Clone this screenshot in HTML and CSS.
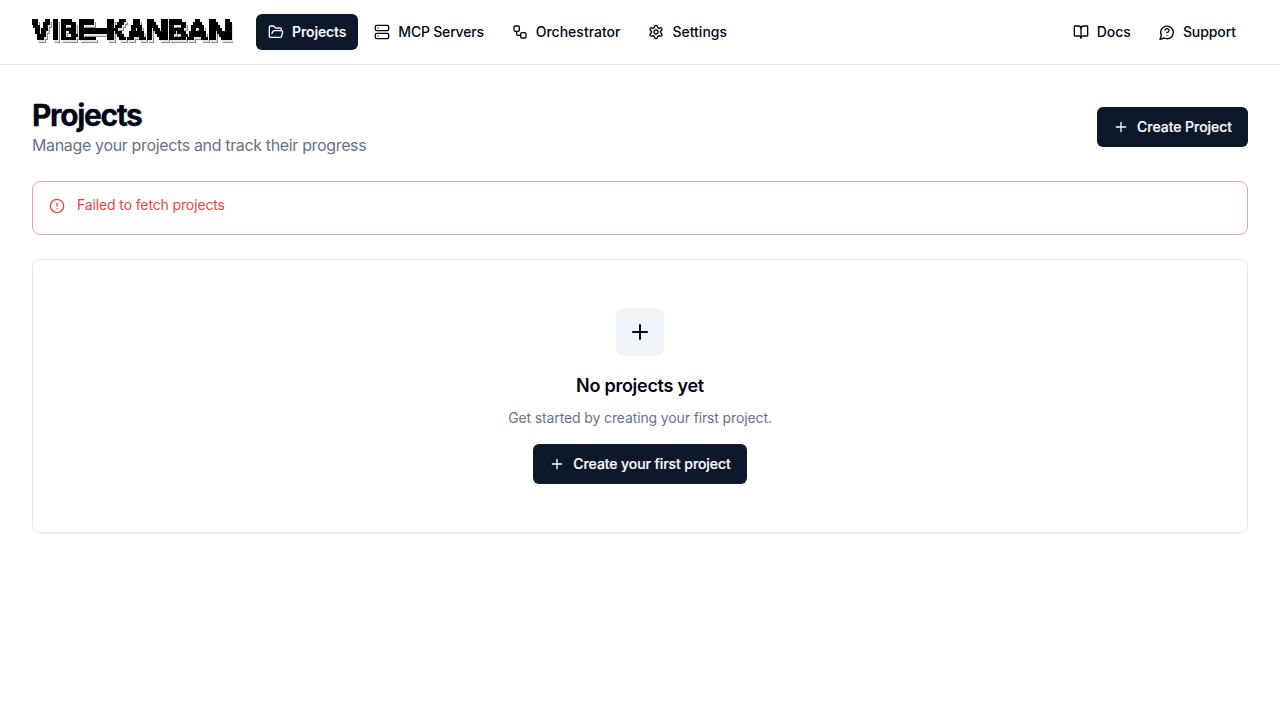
FILE: index.html
```html
<!DOCTYPE html>
<html lang="en">
<head>
<meta charset="utf-8">
<title>Vibe Kanban</title>
<link rel="stylesheet" href="styles.css">
</head>
<body>
<header class="navbar">
  <svg class="logo" width="200" height="26" viewBox="0 0 200 26" role="img" aria-label="VIBE-KANBAN">
    <defs>
      <filter id="pixel-shadow" filterUnits="userSpaceOnUse" x="0" y="0" width="201" height="27" color-interpolation-filters="sRGB">
        <feFlood x="0" y="1" width="1" height="1" flood-color="#000" result="point"/>
        <feOffset in="point" x="0" y="0" width="2" height="3" result="cell"/>
        <feTile in="cell" result="grid"/>
        <feComposite in="SourceGraphic" in2="grid" operator="in"/>
        <feComponentTransfer><feFuncA type="discrete" tableValues="0 1"/></feComponentTransfer>
        <feMorphology operator="dilate" radius="1" result="blocks"/>
        <feFlood flood-color="#8c8c8c"/>
        <feComposite in2="blocks" operator="in"/>
        <feOffset dx="2" dy="3" result="shade"/>
        <feFlood flood-color="#e4e4e4"/>
        <feComposite in2="blocks" operator="in"/>
        <feOffset dx="1" dy="2" result="gap"/>
        <feMerge><feMergeNode in="shade"/><feMergeNode in="gap"/><feMergeNode in="blocks"/></feMerge>
      </filter>
    </defs>
    <g class="logo-text" filter="url(#pixel-shadow)">
      <text x="0" y="21" textLength="18" lengthAdjust="spacingAndGlyphs">V</text>
      <text x="19.5" y="21" textLength="7" lengthAdjust="spacingAndGlyphs">I</text>
      <text x="28" y="21" textLength="17.5" lengthAdjust="spacingAndGlyphs">B</text>
      <text x="45.5" y="21" textLength="17.5" lengthAdjust="spacingAndGlyphs">E</text>
      <text x="61.5" y="20" textLength="14" lengthAdjust="spacingAndGlyphs">-</text>
      <text x="75" y="21" textLength="19" lengthAdjust="spacingAndGlyphs">K</text>
      <text x="95" y="21" textLength="19" lengthAdjust="spacingAndGlyphs">A</text>
      <text x="113.5" y="21" textLength="23" lengthAdjust="spacingAndGlyphs">N</text>
      <text x="136" y="21" textLength="19.5" lengthAdjust="spacingAndGlyphs">B</text>
      <text x="155.5" y="21" textLength="20" lengthAdjust="spacingAndGlyphs">A</text>
      <text x="176" y="21" textLength="24" lengthAdjust="spacingAndGlyphs">N</text>
    </g>
  </svg>
  <nav class="nav-links">
    <a class="nav-item active"><svg class="icon" viewBox="0 0 24 24"><path d="m6 14 1.5-2.9A2 2 0 0 1 9.24 10H20a2 2 0 0 1 1.94 2.5l-1.54 6a2 2 0 0 1-1.95 1.5H4a2 2 0 0 1-2-2V5a2 2 0 0 1 2-2h3.9a2 2 0 0 1 1.69.9l.81 1.2a2 2 0 0 0 1.67.9H18a2 2 0 0 1 2 2v2"/></svg>Projects</a>
    <a class="nav-item servers"><svg class="icon" viewBox="0 0 24 24"><rect width="20" height="8" x="2" y="2" rx="2"/><rect width="20" height="8" x="2" y="14" rx="2"/><path d="M6 6h.01M6 18h.01"/></svg>MCP Servers</a>
    <a class="nav-item"><svg class="icon" viewBox="0 0 24 24"><rect width="8" height="8" x="3" y="3" rx="2"/><path d="M7 11v4a2 2 0 0 0 2 2h4"/><rect width="8" height="8" x="13" y="13" rx="2"/></svg>Orchestrator</a>
    <a class="nav-item"><svg class="icon" viewBox="0 0 24 24"><path d="M12.22 2h-.44a2 2 0 0 0-2 2v.18a2 2 0 0 1-1 1.73l-.43.25a2 2 0 0 1-2 0l-.15-.08a2 2 0 0 0-2.73.73l-.22.38a2 2 0 0 0 .73 2.73l.15.1a2 2 0 0 1 1 1.72v.51a2 2 0 0 1-1 1.74l-.15.09a2 2 0 0 0-.73 2.73l.22.38a2 2 0 0 0 2.73.73l.15-.08a2 2 0 0 1 2 0l.43.25a2 2 0 0 1 1 1.73V20a2 2 0 0 0 2 2h.44a2 2 0 0 0 2-2v-.18a2 2 0 0 1 1-1.73l.43-.25a2 2 0 0 1 2 0l.15.08a2 2 0 0 0 2.73-.73l.22-.39a2 2 0 0 0-.73-2.73l-.15-.08a2 2 0 0 1-1-1.74v-.5a2 2 0 0 1 1-1.74l.15-.09a2 2 0 0 0 .73-2.73l-.22-.38a2 2 0 0 0-2.73-.73l-.15.08a2 2 0 0 1-2 0l-.43-.25a2 2 0 0 1-1-1.73V4a2 2 0 0 0-2-2z"/><circle cx="12" cy="12" r="3"/></svg>Settings</a>
  </nav>
  <nav class="nav-links nav-right">
    <a class="nav-item"><svg class="icon" viewBox="0 0 24 24"><path d="M12 7v14"/><path d="M3 18a1 1 0 0 1-1-1V4a1 1 0 0 1 1-1h5a4 4 0 0 1 4 4 4 4 0 0 1 4-4h5a1 1 0 0 1 1 1v13a1 1 0 0 1-1 1h-6a3 3 0 0 0-3 3 3 3 0 0 0-3-3z"/></svg>Docs</a>
    <a class="nav-item support"><svg class="icon" viewBox="0 0 24 24"><path d="M7.9 20A9 9 0 1 0 4 16.1L2 22Z" transform="translate(-.6 0) scale(1.05)"/><path d="M9.09 9a3 3 0 0 1 5.83 1c0 2-3 3-3 3M12 17h.01"/></svg>Support</a>
  </nav>
</header>
<main class="page">
  <div class="page-head">
    <div>
      <h1 class="title">Projects</h1>
      <p class="subtitle">Manage your projects and track their progress</p>
    </div>
    <button class="button"><svg class="icon" viewBox="0 0 24 24"><path d="M5 12h14M12 5v14"/></svg>Create Project</button>
  </div>
  <div class="alert" role="alert"><svg class="icon" viewBox="0 0 24 24"><circle cx="12" cy="12" r="10"/><path d="M12 8v4M12 16h.01"/></svg>Failed to fetch projects</div>
  <section class="card">
    <div class="card-icon"><svg class="icon large" viewBox="0 0 24 24"><path d="M5 12h14M12 5v14"/></svg></div>
    <h2 class="card-title">No projects yet</h2>
    <p class="card-text">Get started by creating your first project.</p>
    <button class="button first"><svg class="icon" viewBox="0 0 24 24"><path d="M5 12h14M12 5v14"/></svg>Create your first project</button>
  </section>
</main>
</body>
</html>
```
FILE: styles.css
```css
* { box-sizing: border-box; }
body { margin: 0; background: #fff; color: #020817; font-family: Inter, sans-serif; font-size: 16px; line-height: 24px; }
h1, h2, p { margin: 0; }
.navbar { display: flex; align-items: center; height: 65px; padding: 0 32px; border-bottom: 1px solid #e2e8f0; }
.logo { flex: none; margin-right: 24px; overflow: visible; }
.logo-text { font: bold 27px "Liberation Sans", sans-serif; fill: #000; stroke: #000; stroke-width: 1.3; stroke-linejoin: miter; }
.nav-links { display: flex; gap: 4px; }
.nav-right { margin-left: auto; }
.nav-item { display: flex; align-items: center; gap: 8px; height: 36px; padding: 0 12px; border-radius: 6px; font-size: 14px; font-weight: 500; line-height: 20px; }
.active { background: #0f172a; color: #f8fafc; font-weight: 600; letter-spacing: -.14px; }
.servers { letter-spacing: -.2px; }
.support { letter-spacing: -.08px; }
.icon { flex: none; width: 16px; height: 16px; fill: none; stroke: currentColor; stroke-width: 2; stroke-linecap: round; stroke-linejoin: round; }
.large { width: 24px; height: 24px; }
.page { display: flex; flex-direction: column; gap: 24px; padding: 32px; }
.page-head { display: flex; align-items: center; justify-content: space-between; height: 60px; }
.title { font-size: 30px; line-height: 36px; font-weight: 700; letter-spacing: -1.38px; -webkit-text-stroke: .3px currentColor; }
.subtitle { color: #64748b; letter-spacing: -.35px; }
.button { display: flex; align-items: center; gap: 8px; height: 40px; padding: 0 16px; border: 0; border-radius: 6px; background: #0f172a; color: #f8fafc; font: 500 14px/20px Inter, sans-serif; letter-spacing: -.04px; -webkit-text-stroke: .2px currentColor; }
.first { letter-spacing: -.08px; }
.alert { display: flex; gap: 12px; height: 54px; padding: 13px 16px; border: 1px solid #f7a1a1; border-radius: 8px; color: #ef4444; font-size: 14px; line-height: 20px; letter-spacing: -.13px; }
.alert .icon { margin-top: 3px; }
.card { display: flex; flex-direction: column; align-items: center; height: 274px; padding-top: 48px; border: 1px solid #e2e8f0; border-radius: 8px; box-shadow: 0 1px 2px rgba(0, 0, 0, .05); }
.card-icon { display: flex; align-items: center; justify-content: center; width: 48px; height: 48px; border-radius: 8px; background: #f1f5f9; }
.card-title { margin-top: 16px; font-size: 18px; line-height: 28px; font-weight: 600; letter-spacing: -.27px; }
.card-text { margin: 8px 0 16px; color: #64748b; font-size: 14px; line-height: 20px; letter-spacing: -.13px; }
```
